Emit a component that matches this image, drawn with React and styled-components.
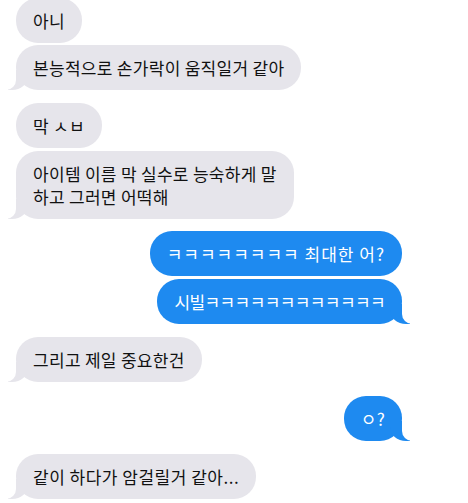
import React from 'react'
import styled, { createGlobalStyle } from 'styled-components'

const GRAY = '#e6e5eb'
const BLUE = '#1e8af0'

const messages = [
    { id: 1, me: false, text: '아니', gap: -2 },
    { id: 2, me: false, text: '본능적으로 손가락이 움직일거 같아', gap: 2, tail: true },
    { id: 3, me: false, text: '막 ㅅㅂ', gap: 13 },
    { id: 4, me: false, text: '아이템 이름 막 실수로 능숙하게 말\n하고 그러면 어떡해', gap: 3, tail: true },
    { id: 5, me: true, text: 'ㅋㅋㅋㅋㅋㅋㅋㅋ 최대한 어?', gap: 12, spacing: 1 },
    { id: 6, me: true, text: '시빌ㅋㅋㅋㅋㅋㅋㅋㅋㅋㅋㅋㅋ', gap: 3, tail: true, spacing: -0.6 },
    { id: 7, me: false, text: '그리고 제일 중요한건', gap: 13, tail: true },
    { id: 8, me: true, text: 'ㅇ?', gap: 14, tail: true },
    { id: 9, me: false, text: '같이 하다가 암걸릴거 같아...', gap: 13, tail: true, spacing: 0.5 },
]

const App = () => {
    return (
        <>
            <GlobalStyle />
            <Thread>
                {messages.map((m) => (
                    <Row key={m.id} $me={m.me} $gap={m.gap}>
                        <Bubble $me={m.me} $tail={m.tail} $spacing={m.spacing ?? 0.3}>
                            {m.text}
                        </Bubble>
                    </Row>
                ))}
            </Thread>
        </>
    )
}

export default App

const GlobalStyle = createGlobalStyle`
    html, body {
        margin: 0;
        padding: 0;
        background: #ffffff;
        overflow: hidden;
    }
`

const Thread = styled.div`
    width: 468px;
    height: 503px;
    display: flex;
    flex-direction: column;
    padding: 0 66px 0 16px;
    box-sizing: border-box;
    overflow: hidden;
    background: #ffffff;
`

const Row = styled.div`
    display: flex;
    justify-content: ${(p) => (p.$me ? 'flex-end' : 'flex-start')};
    margin-top: ${(p) => p.$gap}px;
`

const Bubble = styled.div`
    position: relative;
    padding: 11px 17px;
    border-radius: 22px;
    font-family: 'Noto Sans CJK KR', 'Noto Sans', sans-serif;
    font-size: 17px;
    letter-spacing: ${(p) => p.$spacing}px;
    line-height: 23px;
    white-space: pre-line;
    color: ${(p) => (p.$me ? '#ffffff' : '#111111')};
    background: ${(p) => (p.$me ? BLUE : GRAY)};

    &::before,
    &::after {
        content: '';
        display: ${(p) => (p.$tail ? 'block' : 'none')};
        position: absolute;
        bottom: 0;
        height: 20px;
    }

    &::before {
        width: 20px;
        background: ${(p) => (p.$me ? BLUE : GRAY)};
        ${(p) =>
            p.$me
                ? 'right: -8px; border-bottom-left-radius: 16px 14px;'
                : 'left: -8px; border-bottom-right-radius: 16px 14px;'}
    }

    &::after {
        width: 10px;
        background: #ffffff;
        ${(p) =>
            p.$me
                ? 'right: -10px; border-bottom-left-radius: 10px;'
                : 'left: -10px; border-bottom-right-radius: 10px;'}
    }
`
